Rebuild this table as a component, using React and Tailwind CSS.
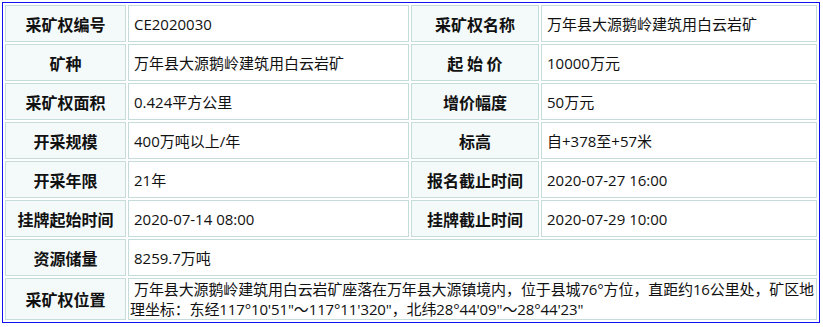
import React from 'react';

const rows = [
  [['采矿权编号', 'CE2020030'], ['采矿权名称', '万年县大源鹅岭建筑用白云岩矿']],
  [['矿种', '万年县大源鹅岭建筑用白云岩矿'], ['起 始 价', '10000万元']],
  [['采矿权面积', '0.424平方公里'], ['增价幅度', '50万元']],
  [['开采规模', '400万吨以上/年'], ['标高', '自+378至+57米']],
  [['开采年限', '21年'], ['报名截止时间', '2020-07-27 16:00']],
  [['挂牌起始时间', '2020-07-14 08:00'], ['挂牌截止时间', '2020-07-29 10:00']],
];

const label = 'h-[37px] border border-[#c6dcda] bg-[#f4fafa] text-center align-middle text-[16px] font-bold text-[#111] whitespace-pre';
const value = 'h-[37px] border border-[#c6dcda] bg-white pl-[5px] align-middle text-[15px] text-[#111]';
const cjk = { fontFamily: '"Noto Sans CJK SC", sans-serif' };

export default function App() {
  return (
    <div className="bg-white p-[2px]" style={{ fontFamily: '"Open Sans", "Noto Sans CJK SC", sans-serif' }}>
      <table className="w-[818px] table-fixed border-separate border-spacing-[2px] border border-[#1010f0] leading-[20px]">
        <colgroup>
          <col className="w-[121px]" />
          <col className="w-[281px]" />
          <col className="w-[128px]" />
          <col className="w-[276px]" />
        </colgroup>
        <tbody>
          {rows.map((r, i) => (
            <tr key={i}>
              <td className={label} style={cjk}>{r[0][0]}</td>
              <td className={value}>{r[0][1]}</td>
              <td className={label} style={cjk}>{r[1][0]}</td>
              <td className={value}>{r[1][1]}</td>
            </tr>
          ))}
          <tr>
            <td className={label} style={cjk}>资源储量</td>
            <td className={value} colSpan={3}>8259.7万吨</td>
          </tr>
          <tr>
            <td className="h-[41px] border border-[#c6dcda] bg-[#f4fafa] text-center align-middle text-[16px] font-bold text-[#111]" style={cjk}>采矿权位置</td>
            <td className="h-[41px] border border-[#c6dcda] bg-white pl-[1px] indent-[4px] align-middle text-[15px] tracking-[-0.12px] text-[#111]" colSpan={3}>
              万年县大源鹅岭建筑用白云岩矿座落在万年县大源镇境内，位于县城76°方位，直距约16公里处，矿区地理坐标：东经117°10'51"～117°11'320"，北纬28°44'09"～28°44'23"
            </td>
          </tr>
        </tbody>
      </table>
    </div>
  );
}
